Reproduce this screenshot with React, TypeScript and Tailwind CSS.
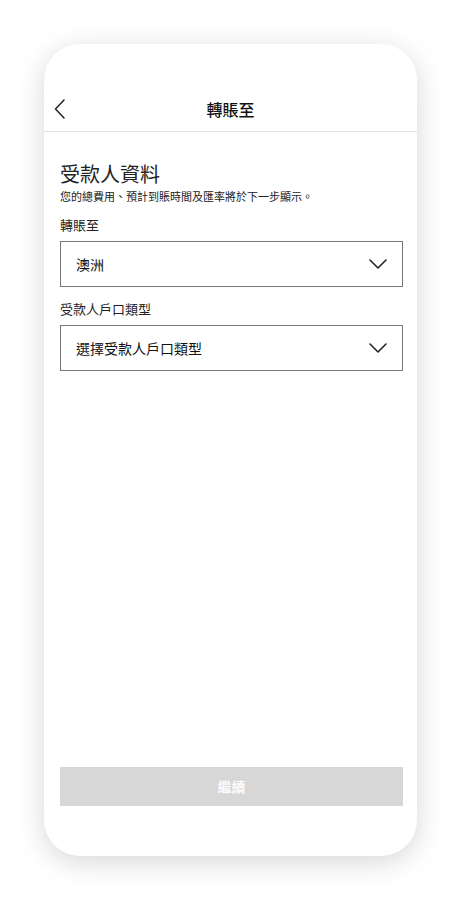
import React from "react";

const Chevron = () => (
  <svg width="18" height="10" viewBox="0 0 18 10" fill="none">
    <path d="M1 1l8 8 8-8" stroke="#222" strokeWidth="1.6" strokeLinecap="round" strokeLinejoin="round" />
  </svg>
);

export default function App() {
  const font = { fontFamily: '"Noto Sans CJK TC", "Noto Sans", sans-serif' };
  return (
    <div className="w-[463px] h-[900px] bg-white pt-[44px] pl-[44px]" style={font}>
      <div className="w-[373px] h-[812px] bg-white rounded-[36px] shadow-[0_6px_28px_rgba(0,0,0,0.16)] flex flex-col">
        <div className="h-[88px] border-b border-[#e2e2e2] relative flex items-end justify-center pb-[10px]">
          <svg className="absolute left-[10px] bottom-[12px]" width="12" height="20" viewBox="0 0 12 20" fill="none">
            <path d="M10 1L1.5 10 10 19" stroke="#222" strokeWidth="1.5" strokeLinecap="round" strokeLinejoin="round" />
          </svg>
          <span className="text-[16px] font-medium text-[#111] leading-[24px]">轉賬至</span>
        </div>
        <div className="pl-[16px] pr-[14px] pt-[29px] flex flex-col flex-1">
          <div className="text-[20px] leading-[26px] text-[#222]">受款人資料</div>
          <div className="text-[11px] leading-[16px] text-[#222] mt-[1px]">您的總費用、預計到賬時間及匯率將於下一步顯示。</div>
          <div className="text-[13px] leading-[18px] text-[#222] mt-[12px]">轉賬至</div>
          <div className="mt-[7px] h-[46px] border border-[#777] flex items-center justify-between pl-[15px] pr-[15px]">
            <span className="text-[14px] text-[#111]">澳洲</span>
            <Chevron />
          </div>
          <div className="text-[13px] leading-[18px] text-[#222] mt-[13px]">受款人戶口類型</div>
          <div className="mt-[7px] h-[46px] border border-[#777] flex items-center justify-between pl-[15px] pr-[15px]">
            <span className="text-[14px] text-[#111]">選擇受款人戶口類型</span>
            <Chevron />
          </div>
          <div className="flex-1" />
          <div className="h-[39px] bg-[#d7d7d7] flex items-center justify-center mb-[50px]">
            <span className="text-[14px] text-white font-medium">繼續</span>
          </div>
        </div>
      </div>
    </div>
  );
}
